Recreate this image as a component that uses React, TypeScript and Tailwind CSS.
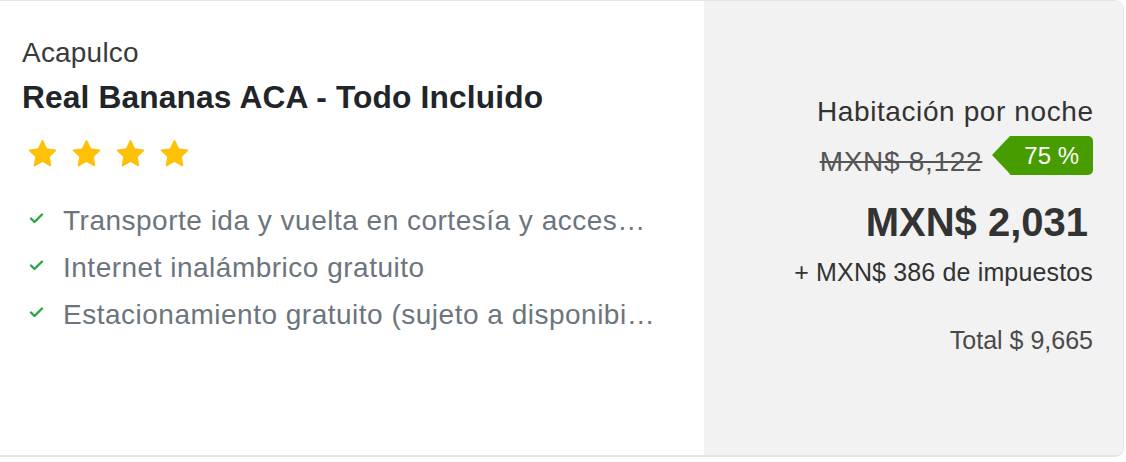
import React from "react";

const Star = () => (
  <svg width="31" height="29" viewBox="0 0 24 23" className="block">
    <path
      d="M12 1.5l3.1 6.6 7.1.9-5.2 4.9 1.3 7.1L12 17.5 5.7 21l1.3-7.1L1.8 9l7.1-.9z"
      fill="#FFC107"
      stroke="#FFC107"
      strokeWidth="1.4"
      strokeLinejoin="round"
    />
  </svg>
);

const Check = () => (
  <svg width="15" height="12" viewBox="0 0 15 12" className="block">
    <polyline
      points="2,6.5 5.5,10 13,2.5"
      fill="none"
      stroke="#28a745"
      strokeWidth="2.4"
      strokeLinecap="round"
      strokeLinejoin="round"
    />
  </svg>
);

const features = [
  "Transporte ida y vuelta en cortesía y acces…",
  "Internet inalámbrico gratuito",
  "Estacionamiento gratuito (sujeto a disponibi…",
];

export default function App() {
  return (
    <div className="bg-white w-[1126px] h-[462px] font-['Liberation_Sans',Arial,sans-serif]">
      <div className="flex w-[1124px] h-[457px] border-t border-r border-b-2 border-[#e4e4e4] rounded-r-[9px] overflow-hidden">
        <div className="w-[704px] bg-white pt-[35px] pl-[22px] flex flex-col">
          <div className="text-[28px] leading-[34px] text-[#3a3a3a] tracking-[0.2px]">Acapulco</div>
          <div className="mt-[7px] text-[31.7px] leading-[40px] font-bold text-[#212529] tracking-[0.15px]">
            Real Bananas ACA - Todo Incluido
          </div>
          <div className="mt-[22px] flex gap-[13px] pl-[5px]">
            <Star />
            <Star />
            <Star />
            <Star />
          </div>
          <div className="mt-[29px] flex flex-col">
            {features.map((f) => (
              <div key={f} className="flex items-center h-[47px]">
                <div className="w-[41px] pl-[7px] pb-[6px]">
                  <Check />
                </div>
                <div className="whitespace-nowrap text-[28px] leading-[47px] text-[#6c757d] tracking-[0.5px]">{f}</div>
              </div>
            ))}
          </div>
        </div>
        <div className="flex-1 bg-[#f2f2f2] pt-[94px] pr-[30px] flex flex-col items-end">
          <div className="text-[28px] leading-[34px] text-[#333] tracking-[0.6px] -mr-[0.6px]">Habitación por noche</div>
          <div className="mt-[7px] flex items-start">
            <div className="mt-[9px] text-[28px] leading-[34px] text-[#555] line-through decoration-[#555] tracking-[0.7px]">
              MXN$ 8,122
            </div>
            <div className="ml-[10px] flex h-[39px]">
              <div className="w-0 h-0 border-y-[19.5px] border-y-transparent border-r-[18px] border-r-[#479c00]" />
              <div className="bg-[#479c00] rounded-r-[5px] h-[39px] pl-[14px] pr-[14px] text-white text-[24px] leading-[39px]">
                75 %
              </div>
            </div>
          </div>
          <div className="mt-[19px] mr-[5px] text-[40px] leading-[48px] font-bold text-[#333]">MXN$ 2,031</div>
          <div className="mt-[11px] text-[25px] leading-[30px] text-[#333] tracking-[0.15px]">+ MXN$ 386 de impuestos</div>
          <div className="mt-[38px] text-[25px] leading-[30px] text-[#4a4a4a]">Total $ 9,665</div>
        </div>
      </div>
    </div>
  );
}
